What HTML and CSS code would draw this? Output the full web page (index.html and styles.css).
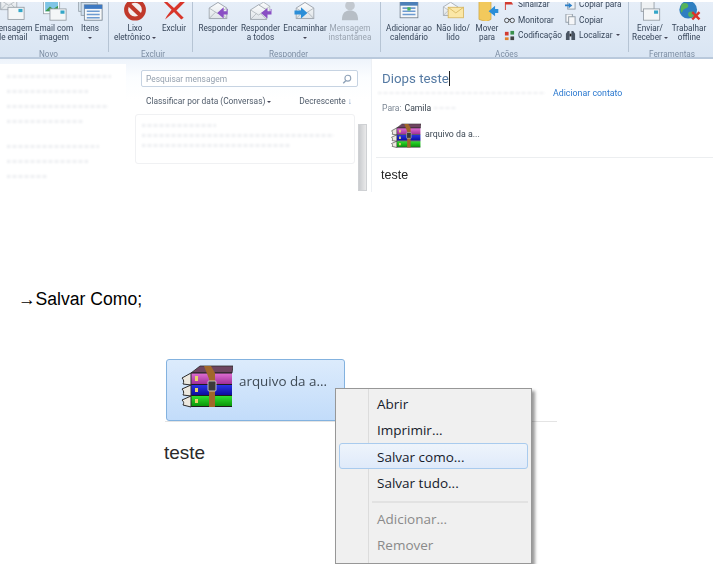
FILE: index.html
```html
<!DOCTYPE html>
<html lang="pt">
<head>
<meta charset="utf-8">
<title>Salvar anexo</title>
<link rel="stylesheet" href="styles.css">
</head>
<body>
<svg class="sprite" aria-hidden="true">
  <defs>
    <linearGradient id="envBody" x1="0" y1="0" x2="0" y2="1"><stop offset="0" stop-color="#fbfcfd"/><stop offset="1" stop-color="#dfe4e8"/></linearGradient>
    <linearGradient id="pink" x1="0" y1="0" x2="0" y2="1"><stop offset="0" stop-color="#e070d4"/><stop offset="1" stop-color="#a02f98"/></linearGradient>
    <linearGradient id="blue" x1="0" y1="0" x2="0" y2="1"><stop offset="0" stop-color="#2a35e6"/><stop offset="1" stop-color="#0c0c9c"/></linearGradient>
    <linearGradient id="green" x1="0" y1="0" x2="0" y2="1"><stop offset="0" stop-color="#2fe02f"/><stop offset="1" stop-color="#0a960a"/></linearGradient>
    <symbol id="env" viewBox="0 0 24 22">
      <path d="M1 8 12 1l11 7v13H1z" fill="url(#envBody)" stroke="#8f979f"/>
      <path d="M1 8l11 7 11-7M1 21l8-8M23 21l-8-8" fill="none" stroke="#a9b0b6"/>
    </symbol>
    <symbol id="rar" viewBox="0 0 52 44">
      <path d="M10 8 19 1h33l-1 7z" fill="#6e4560" stroke="#2b2b2b" stroke-width=".8"/>
      <rect x="10" y="8" width="41" height="11" fill="url(#pink)"/>
      <rect x="10" y="20" width="41" height="10" fill="url(#blue)"/>
      <rect x="10" y="31" width="41" height="10" fill="url(#green)"/>
      <path d="M10 8h41M10 19.500h41M10 30.500h41M10 41.500h41" stroke="#1c1c1c" stroke-width="1.100"/>
      <path d="M10 8 1 13c2 2 2 4 1 6l8 1zM10 20l-9 4c2 2 2 4 1 6l8 1zM10 31l-9 4c2 2 2 3 1 5l8 2z" fill="#ece8df" stroke="#2b2b2b"/>
      <path d="M23 1h7l4 7v34h-6V14z" fill="#a0672a"/>
      <rect x="27" y="16" width="8" height="10" rx="1" fill="#3a3a3a" stroke="#ddd" stroke-width=".8"/>
      <path d="M14 11h3v5h-3zM14 23h3v4h-3zM14 34h3v4h-3z" fill="#e9d36a"/>
    </symbol>
  </defs>
</svg>

<section class="shot">
  <header class="ribbon">
    <div class="group g-novo">
      <div class="btns">
        <div class="rbtn w46"><svg class="ico" viewBox="0 0 30 26"><use href="#env" x="0" y="-7" width="22" height="20"/><rect x="10" y="9" width="20" height="15" fill="#f4f6f7" stroke="#8f979f"/><rect x="23" y="11" width="5" height="4" fill="#33a6c8"/></svg><span>Mensagem<br>de email</span></div>
        <div class="rbtn w38"><svg class="ico" viewBox="0 0 30 26"><rect x="2" y="0" width="20" height="17" fill="#fff" stroke="#9aa2a8"/><rect x="4" y="2" width="16" height="12" fill="#7fc5e6"/><path d="M4 14l6-6 4 3 6-4v7z" fill="#3d9a4e"/><rect x="10" y="11" width="20" height="14" fill="#f4f6f7" stroke="#8f979f"/><rect x="23" y="13" width="5" height="4" fill="#33a6c8"/></svg><span>Email com<br>imagem</span></div>
        <div class="rbtn w34"><svg class="ico" viewBox="0 0 30 26"><rect x="1" y="0" width="20" height="14" fill="#dbe7f1" stroke="#8f9aa4"/><rect x="4" y="3" width="20" height="16" fill="#cfdfee" stroke="#8f9aa4"/><rect x="8" y="6" width="22" height="19" fill="#f5f7f9" stroke="#6f7d8a"/><rect x="8" y="6" width="22" height="5" fill="#3d79c2"/><path d="M11 13h16v2H11zm0 4h16v2H11zm0 4h16v2H11z" fill="#6d9bd1"/></svg><span>Itens<br><i class="caret"></i></span></div>
      </div>
      <p class="glabel">Novo</p>
    </div>
    <div class="group g-excluir">
      <div class="btns">
        <div class="rbtn w42"><svg class="ico" viewBox="0 0 30 26"><circle cx="15" cy="12" r="11" fill="#f3eeee" stroke="#c0392b" stroke-width="5"/><path d="M7 5l16 15" stroke="#c0392b" stroke-width="5"/></svg><span>Lixo<br>eletrônico <i class="caret"></i></span></div>
        <div class="rbtn w36"><svg class="ico" viewBox="0 0 30 26"><path d="M4 0 15 10 26-1l3 3L18 13l9 9-3 2-9-9-11 9c2-5 6-9 8-12L2 2z" fill="#d8352a"/></svg><span>Excluir<br>&nbsp;</span></div>
      </div>
      <p class="glabel">Excluir</p>
    </div>
    <div class="group g-responder">
      <div class="btns">
        <div class="rbtn w42"><svg class="ico" viewBox="0 0 30 26"><use href="#env" x="3" y="2" width="24" height="22"/><path d="M26 11v3h-4V9l-8 7 8 7v-5h5v-7z" fill="#8a4fc4"/></svg><span>Responder<br>&nbsp;</span></div>
        <div class="rbtn w43"><svg class="ico" viewBox="0 0 30 26"><use href="#env" x="9" y="2" width="18" height="16"/><use href="#env" x="1" y="5" width="22" height="20"/><path d="M27 11v3h-4v-4l-8 6 8 7v-5h5v-7z" fill="#8a4fc4"/></svg><span>Responder<br>a todos</span></div>
        <div class="rbtn w46"><svg class="ico" viewBox="0 0 30 26"><use href="#env" x="3" y="2" width="24" height="22"/><path d="M2 13h8V9l8 7-8 7v-5H2z" fill="#2b8ed8"/></svg><span>Encaminhar<br><i class="caret"></i></span></div>
        <div class="rbtn w44 off"><svg class="ico" viewBox="0 0 30 26"><circle cx="15" cy="7" r="6" fill="#c2c8cf"/><path d="M5 25c0-9 4-12 10-12s10 3 10 12z" fill="#b7bec6"/></svg><span>Mensagem<br>instantânea</span></div>
      </div>
      <p class="glabel">Responder</p>
    </div>
    <div class="group g-acoes">
      <div class="btns">
        <div class="rbtn w48"><svg class="ico" viewBox="0 0 30 26"><rect x="4" y="2" width="22" height="20" fill="#f5f7f9" stroke="#6f7d8a"/><rect x="4" y="2" width="22" height="5" fill="#4c7fb8"/><path d="M7 9h16v2H7zm0 4h16v2H7zm0 4h16v2H7z" fill="#6d9bd1"/><rect x="13" y="9" width="4" height="4" fill="#44b15a"/></svg><span>Adicionar ao<br>calendário</span></div>
        <div class="rbtn w40"><svg class="ico" viewBox="0 0 30 26"><use href="#env" x="2" y="2" width="20" height="18"/><rect x="9" y="9" width="19" height="13" fill="#fbe7a6" stroke="#d5b35c"/><path d="M9 9l9.500 7L28 9" fill="none" stroke="#d5b35c"/></svg><span>Não lido/<br>lido</span></div>
        <div class="rbtn w28"><svg class="ico" viewBox="0 0 30 26"><path d="M5-2h13l2 2v24l-6 3-9-3z" fill="#f2c95c" stroke="#c79c35" stroke-width=".7"/><path d="M29 11v5h-4v4l-8-6 8-7v4z" fill="#2b8ed8"/></svg><span>Mover<br>para</span></div>
        <div class="smallcol col1">
          <div class="sbtn"><svg class="sico" viewBox="0 0 12 12"><path d="M1 0h9L8 3l2 3H2v6H1z" fill="#d23b30"/></svg>Sinalizar</div>
          <div class="sbtn"><svg class="sico" viewBox="0 0 12 12"><circle cx="3" cy="7" r="2.400" fill="none" stroke="#444"/><circle cx="9" cy="7" r="2.400" fill="none" stroke="#444"/><path d="M5 6h2" stroke="#444"/></svg>Monitorar</div>
          <div class="sbtn"><svg class="sico" viewBox="0 0 12 12"><path d="M1 2h4v4H1z" fill="#d23b30"/><path d="M7 1h4v4H7z" fill="#3a8f4b"/><path d="M1 8h4v3H1z" fill="#e0812c"/><path d="M7 7h4v4H7z" fill="#444"/></svg>Codificação</div>
        </div>
        <div class="smallcol col2">
          <div class="sbtn"><svg class="sico" viewBox="0 0 12 12"><rect x="3" y="0" width="8" height="11" fill="#eef2f6" stroke="#8d98a3"/><path d="M0 6h4V4l4 3-4 3V8H0z" fill="#2b7fc8"/></svg>Copiar para</div>
          <div class="sbtn"><svg class="sico" viewBox="0 0 12 12"><rect x="1" y="0" width="7" height="9" fill="#f5f6f8" stroke="#8d98a3"/><rect x="4" y="3" width="7" height="9" fill="#f5f6f8" stroke="#8d98a3"/></svg>Copiar</div>
          <div class="sbtn"><svg class="sico" viewBox="0 0 12 12"><path d="M1 11V4l2-3h2v10zM7 11V1h2l2 3v7z" fill="#4a5563"/><rect x="5" y="4" width="2" height="3" fill="#222"/></svg>Localizar <i class="caret"></i></div>
        </div>
      </div>
      <p class="glabel">Ações</p>
    </div>
    <div class="group g-ferr">
      <div class="btns">
        <div class="rbtn w38"><svg class="ico" viewBox="0 0 30 26"><rect x="4" y="-1" width="16" height="15" fill="#eef1f3" stroke="#8f979f"/><rect x="7" y="11" width="20" height="14" fill="#f4f6f7" stroke="#8f979f"/><rect x="20" y="13" width="5" height="4" fill="#33a6c8"/></svg><span>Enviar/<br>Receber <i class="caret"></i></span></div>
        <div class="rbtn w40"><svg class="ico" viewBox="0 0 30 26"><circle cx="14" cy="12" r="11" fill="#2f7fc1"/><path d="M6 5c5-3 9 0 8 3s-6 2-7 6-4 0-1-9zM15 15c4-2 8 0 7 3s-4 4-6 3-3-4-1-6z" fill="#55b35a"/><path d="M19 15l9 9M28 15l-9 9" stroke="#d8352a" stroke-width="3"/></svg><span>Trabalhar<br>offline</span></div>
      </div>
      <p class="glabel">Ferramentas</p>
    </div>
  </header>

  <div class="panes">
    <aside class="folders">
      <i class="smudge s93"></i><i class="smudge s80"></i><i class="smudge s92"></i><i class="smudge s76"></i>
      <i class="smudge s88 gap"></i><i class="smudge s80"></i><i class="smudge s36"></i>
    </aside>
    <div class="list">
      <div class="search"><span>Pesquisar mensagem</span><svg class="lens" viewBox="0 0 12 12"><circle cx="7" cy="5" r="3.500" fill="none" stroke="#8fa2b8" stroke-width="1.300"/><path d="M4.500 8 1.500 11" stroke="#8fa2b8" stroke-width="1.600"/></svg></div>
      <div class="sort"><span>Classificar por data (Conversas) <i class="caret"></i></span><span>Decrescente <b class="down">↓</b></span></div>
      <div class="scrollwrap">
        <div class="card"><i class="smudge s36"></i><i class="smudge s93"></i><i class="smudge s80"></i></div>
        <div class="scrollbar"></div>
      </div>
    </div>
    <article class="reading">
      <h1 class="subject">Diops teste<i class="cursor"></i></h1>
      <div class="from"><i class="smudge sender"></i><a>Adicionar contato</a></div>
      <div class="to">Para: <b>Camila</b> <i class="smudge tiny"></i></div>
      <div class="attach"><svg class="rar-s"><use href="#rar"/></svg><span>arquivo da a...</span></div>
      <p class="msg">teste</p>
    </article>
  </div>
</section>

<p class="caption">→Salvar Como;</p>

<section class="detail">
  <div class="head">
    <div class="att-big"><svg class="rar-b"><use href="#rar"/></svg><span>arquivo da a...</span></div>
    <nav class="menu">
      <div class="mi">Abrir</div>
      <div class="mi">Imprimir...</div>
      <div class="mi active">Salvar como...</div>
      <div class="mi">Salvar tudo...</div>
      <hr class="msep">
      <div class="mi dis">Adicionar...</div>
      <div class="mi dis">Remover</div>
    </nav>
  </div>
  <p class="body-text">teste</p>
</section>
</body>
</html>
```

FILE: styles.css
```css
* { box-sizing: border-box; }
html, body { margin: 0; height: 564px; overflow: hidden; background: #fff; }
body { font-family: Roboto, "Liberation Sans", sans-serif; position: relative; }
.sprite { position: absolute; width: 0; height: 0; }

.shot { height: 192px; overflow: hidden; filter: blur(.3px); }

.ribbon { display: flex; height: 57px; margin-top: 2px; margin-left: -11px; width: 724px; overflow: hidden;
  background: linear-gradient(#e6eef8, #d9e5f3); border-bottom: 2px solid #b9c9dc; }
.group { display: flex; flex-direction: column; border-right: 1px solid #b6c4d4; height: 50px; }
.g-novo { width: 120px; }
.g-excluir { width: 84px; padding-left: 5px; }
.g-responder { width: 188px; padding-left: 4px; }
.g-acoes { width: 248px; padding-left: 4px; }
.g-ferr { width: 84px; padding-left: 2px; border-right: 0; }
.btns { display: flex; height: 47px; flex: none; }
.glabel { margin: 0; text-align: center; font-size: 8.200px; line-height: 10px; color: #7d8ea3; }
.rbtn { display: flex; flex-direction: column; align-items: center; text-align: center;
  font-size: 8.200px; line-height: 9.400px; color: #37465a; white-space: nowrap; }
.rbtn span { margin-top: 3px; }
.ico { width: 26px; height: 21px; flex: none; margin-top: -2px; }
.off { color: #9aa4b0; }
.w28 { width: 28px; } .w34 { width: 34px; } .w36 { width: 36px; } .w38 { width: 38px; }
.w40 { width: 40px; } .w42 { width: 42px; } .w43 { width: 43px; } .w44 { width: 44px; }
.w46 { width: 46px; } .w48 { width: 48px; }
.caret { display: inline-block; width: 0; height: 0; vertical-align: middle;
  border: 2px solid transparent; border-top: 2.500px solid #445; border-bottom: 0; }

.smallcol { display: flex; flex-direction: column; gap: 5.500px; margin-top: -3px; font-size: 8.300px; color: #37465a; }
.col1 { width: 61px; margin-left: 3px; }
.col2 { width: 61px; }
.sbtn { display: flex; align-items: center; gap: 3px; height: 10px; white-space: nowrap; }
.sico { width: 11px; height: 11px; flex: none; }

.panes { display: flex; height: 133px; background: linear-gradient(#eef4fb, #fbfdff 18px, #fff 40px); }
.folders { width: 126px; margin-top: 5px; background: #fff; padding: 11px 7px 0; display: flex; flex-direction: column; gap: 12px; }
.smudge { display: block; height: 3px; background: repeating-linear-gradient(90deg, #eceef1 0 3px, #fafafb 3px 6px); filter: blur(.8px); }
.s93 { width: 93%; } .s92 { width: 90%; } .s88 { width: 82%; } .s80 { width: 72%; } .s76 { width: 68%; } .s36 { width: 36%; }
.gap { margin-top: 10px; }

.list { width: 244px; padding: 11px 3px 0 15px; display: flex; flex-direction: column; }
.search { height: 17px; width: 217px; border: 1px solid #c6d3e2; border-radius: 2px; background: #fff;
  display: flex; align-items: center; justify-content: space-between; padding: 0 5px 0 4px;
  font-size: 8.400px; color: #95a1af; }
.lens { width: 10px; height: 10px; }
.sort { display: flex; justify-content: space-between; width: 206px; margin: 6px 0 0 5px; font-size: 8.400px; line-height: 16px; color: #505c6b; }
.down { color: #7d9cc4; }
.scrollwrap { display: flex; gap: 3px; margin: 5px 0 0 -6px; align-items: flex-start; }
.card { width: 220px; height: 50px; border: 1px solid #f0f1f3; border-radius: 3px; background: #fff;
  padding: 9px 6px; display: flex; flex-direction: column; gap: 7px; }
.scrollbar { width: 9px; height: 67px; margin-top: 10px; background: linear-gradient(90deg, #c9cbce, #e9e9ea); border: 1px solid #cfd1d4; }

.reading { flex: 1; margin-left: 1px; padding: 10px 0 0 10px; background: #fff; border-left: 1px solid #edf0f4; }
.subject { margin: 0; font-weight: 400; font-size: 13.300px; line-height: 20px; color: #557aa3; }
.cursor { display: inline-block; width: 1px; height: 15px; background: #222; vertical-align: -3px; }
.from { display: flex; align-items: center; gap: 8px; height: 10px; margin: -1px 0 0 -4px; font-size: 8.800px; }
.from a { color: #2a78cf; }
.sender { width: 167px; height: 2px; }
.to { display: flex; align-items: center; gap: 3px; margin-top: 2px; font-size: 8.600px; line-height: 16px; color: #7c8794; }
.to b { font-weight: 400; color: #39444f; }
.tiny { width: 22px; height: 2px; }
.attach { display: flex; align-items: center; gap: 4px; padding: 7px 0 8px 15px; border-bottom: 1px solid #eceef0; margin-left: -6px;
  font-size: 8.800px; color: #3d4854; }
.attach span { margin-top: -5px; }
.rar-s { width: 30px; height: 26px; }
.msg { margin: 10px 0 0 -1px; font-family: "Liberation Sans", sans-serif; font-size: 12.500px; color: #222; }

.caption { margin: 97px 0 0 18px; height: 20px; font-family: "Liberation Sans", sans-serif; font-size: 17.600px; line-height: 20px; color: #000; }

.detail { margin: 50px 0 0 165px; width: 392px; font-family: "Open Sans", sans-serif; }
.head { position: relative; height: 63px; border-bottom: 1px solid #e4e4e4; padding-left: 1px; }
.att-big { width: 179px; height: 62px; border: 1px solid #83b2df; border-radius: 3px;
  background: linear-gradient(#dcebfc, #c2dcfa); display: flex; gap: 6px; padding: 5px 0 0 14px;
  font-size: 13.400px; line-height: 33px; color: #3e4a55; filter: blur(.3px); }
.rar-b { width: 52px; height: 44px; flex: none; }
.body-text { margin: 20px 0 0 -1px; font-family: "Liberation Sans", sans-serif; font-size: 19px; line-height: 22px; color: #2a2a2a; }

.menu { position: absolute; left: 170px; top: 29px; width: 197px; height: 176px; padding: 1px 3px;
  background: linear-gradient(90deg, #f0f0f0 32px, #dcdcdc 32px, #dcdcdc 33px, #f0f0f0 33px);
  border: 1px solid #979797; box-shadow: 3px 3px 3px rgba(0,0,0,.4); font-size: 13.500px; font-weight: 500; color: #15202b; }
.mi { height: 26.300px; line-height: 26px; padding-left: 37px; border: 1px solid transparent; border-radius: 3px; }
.active { background: linear-gradient(#eef4fb, #dfeafa); border-color: #a9cbee; }
.dis { color: #8a8a8a; }
.msep { margin: 6px 0 2px 33px; border: 0; border-top: 2px solid #e2e2e2; height: 0; }
```
